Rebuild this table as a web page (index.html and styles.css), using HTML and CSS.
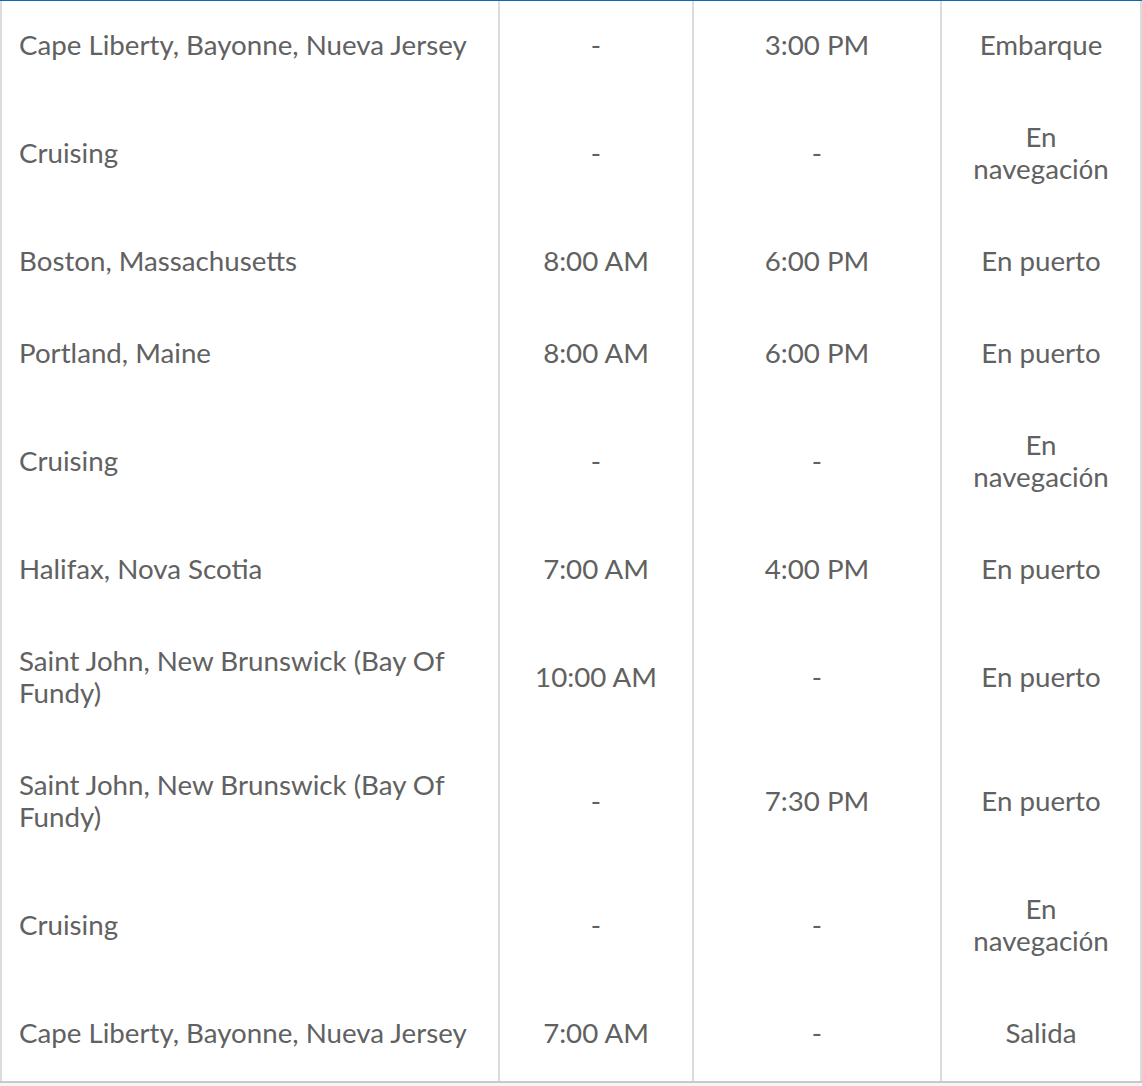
FILE: index.html
```html
<!DOCTYPE html>
<html lang="es">
<head>
<meta charset="utf-8">
<title>Itinerario</title>
<link rel="stylesheet" href="styles.css">
</head>
<body>
<table class="itinerary">
  <colgroup>
    <col class="c-port">
    <col class="c-arr">
    <col class="c-dep">
    <col class="c-act">
  </colgroup>
  <tbody>
    <tr><td class="port">Cape Liberty, Bayonne, Nueva Jersey</td><td>-</td><td>3:00 PM</td><td>Embarque</td></tr>
    <tr><td class="port">Cruising</td><td>-</td><td>-</td><td>En navegaci<span class="fb">ó</span>n</td></tr>
    <tr><td class="port">Boston, Massachusetts</td><td>8:00 AM</td><td>6:00 PM</td><td>En puerto</td></tr>
    <tr><td class="port">Portland, Maine</td><td>8:00 AM</td><td>6:00 PM</td><td>En puerto</td></tr>
    <tr><td class="port">Cruising</td><td>-</td><td>-</td><td>En navegaci<span class="fb">ó</span>n</td></tr>
    <tr><td class="port">Halifax, Nova Scotia</td><td>7:00 AM</td><td>4:00 PM</td><td>En puerto</td></tr>
    <tr><td class="port">Saint John, New Brunswick (Bay Of Fundy)</td><td>10:00 AM</td><td>-</td><td>En puerto</td></tr>
    <tr><td class="port">Saint John, New Brunswick (Bay Of Fundy)</td><td>-</td><td>7:30 PM</td><td>En puerto</td></tr>
    <tr><td class="port">Cruising</td><td>-</td><td>-</td><td>En navegaci<span class="fb">ó</span>n</td></tr>
    <tr><td class="port">Cape Liberty, Bayonne, Nueva Jersey</td><td>7:00 AM</td><td>-</td><td>Salida</td></tr>
  </tbody>
</table>
</body>
</html>
```
FILE: styles.css
```css
html, body {
  margin: 0;
  padding: 0;
  background: #f6f6f6;
}

.itinerary {
  width: 1142px;
  table-layout: fixed;
  border-collapse: separate;
  border-spacing: 0;
  background: #ffffff;
  border-top: 1px solid #0a6db3;
  border-bottom: 2px solid #c9c9c9;
  font-family: Lato, "Liberation Sans", sans-serif;
  font-size: 27.7px;
  line-height: 32px;
  color: #616161;
}

.c-port { width: 498px; }
.c-arr { width: 194px; }
.c-dep { width: 248px; }
.c-act { width: 202px; }

.itinerary td {
  padding: 28px 16px 32px;
  border-left: 2px solid #dcdcdc;
  text-align: center;
  vertical-align: middle;
}

.itinerary td:last-child {
  border-right: 2px solid #dcdcdc;
}

.itinerary td.port {
  text-align: left;
  padding-left: 17px;
}

.fb {
  font-family: "Liberation Sans", sans-serif;
  font-size: 26px;
  line-height: 0;
}
```
